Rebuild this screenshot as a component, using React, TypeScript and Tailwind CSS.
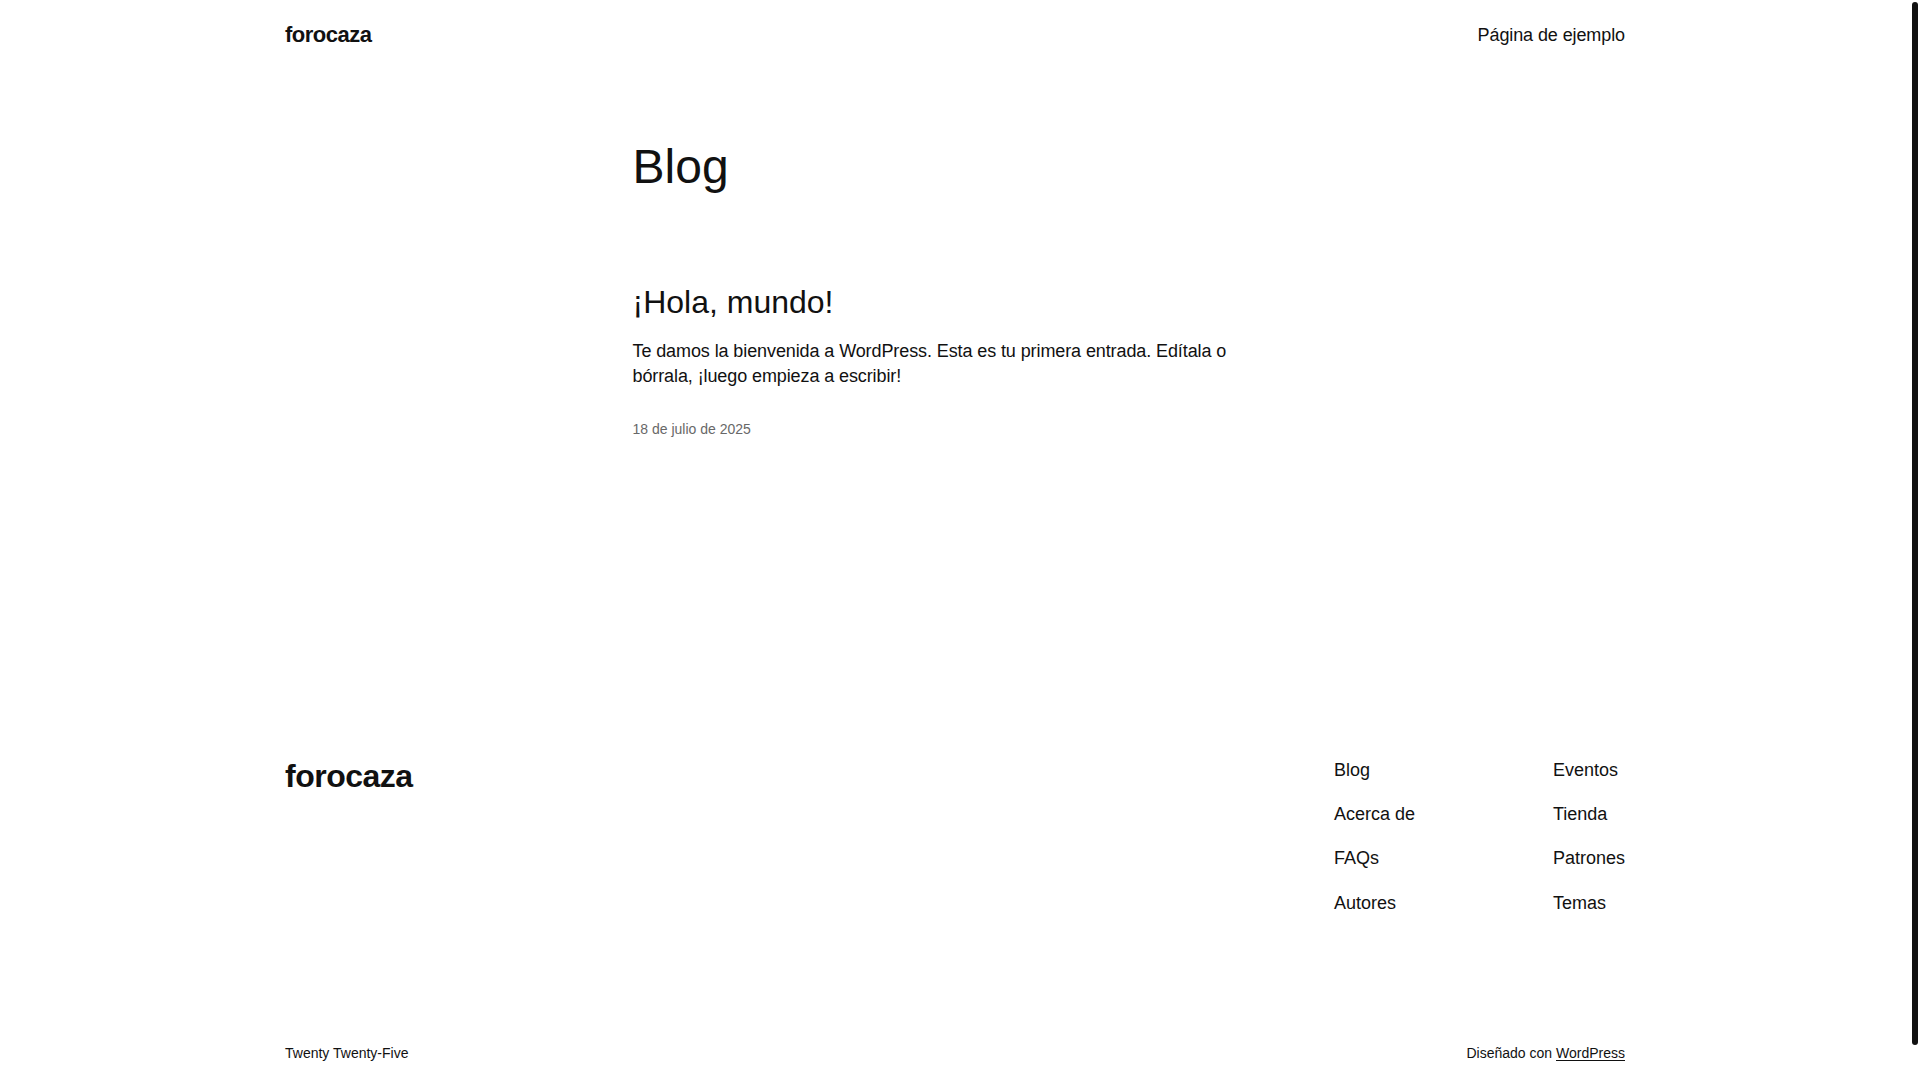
import React from "react";

export default function App() {
  const col1 = ["Blog", "Acerca de", "FAQs", "Autores"];
  const col2 = ["Eventos", "Tienda", "Patrones", "Temas"];
  return (
    <div className="flex bg-white text-[#111111] font-['Liberation_Sans',Arial,sans-serif]">
      <div className="min-w-0 flex-1">
        <header className="px-[50px]">
          <div className="mx-auto flex h-[71px] max-w-[1340px] items-center justify-between">
            <a className="text-[22px] font-bold leading-[1.4] tracking-[-0.5px]">forocaza</a>
            <nav className="text-[18px] leading-[1.4] tracking-[-0.1px]">
              <a>Página de ejemplo</a>
            </nav>
          </div>
        </header>

        <main className="px-[50px]">
          <div className="mx-auto max-w-[645px]">
            <h1 className="mt-[67px] text-[48px] font-normal leading-[1.2]">Blog</h1>
            <h2 className="mt-[87px] text-[32px] font-normal leading-[1.2]">¡Hola, mundo!</h2>
            <p className="mt-[18px] text-[18px] leading-[1.4] tracking-[-0.1px]">
              Te damos la bienvenida a WordPress. Esta es tu primera entrada. Edítala o bórrala, ¡luego
              empieza a escribir!
            </p>
            <div className="mt-[31px] text-[14px] leading-[1.4] text-[#686868]">18 de julio de 2025</div>
          </div>
        </main>

        <footer className="px-[50px] pt-[317px] pb-[55px]">
          <div className="mx-auto max-w-[1340px]">
            <div className="flex items-start justify-between">
              <a className="text-[32px] font-bold leading-[1.2] tracking-[-0.5px]">forocaza</a>
              <div className="mt-[1px] flex gap-[138px]">
                <nav className="flex flex-col gap-[19px] text-[18px] leading-[1.4]">
                  {col1.map((t) => (
                    <a key={t}>{t}</a>
                  ))}
                </nav>
                <nav className="flex flex-col gap-[19px] text-[18px] leading-[1.4]">
                  {col2.map((t) => (
                    <a key={t}>{t}</a>
                  ))}
                </nav>
              </div>
            </div>
            <div className="mt-[128px] flex items-center justify-between text-[14px] leading-[1.4]">
              <span>Twenty Twenty-Five</span>
              <span>
                Diseñado con <a className="underline underline-offset-2">WordPress</a>
              </span>
            </div>
          </div>
        </footer>
      </div>

      <div className="w-[10px] shrink-0 bg-white">
        <div className="mx-auto mt-[2px] h-[1043px] w-[6px] rounded-full bg-[#111111]" />
      </div>
    </div>
  );
}
